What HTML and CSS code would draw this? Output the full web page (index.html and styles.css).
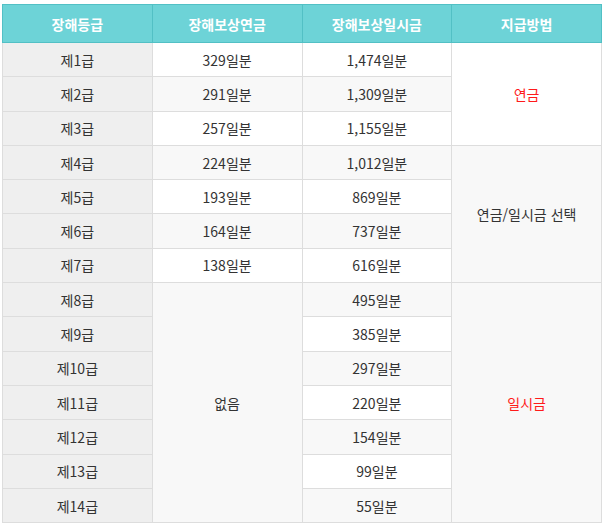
FILE: index.html
```html
<!DOCTYPE html>
<html lang="ko">
<head>
<meta charset="utf-8">
<link rel="stylesheet" href="styles.css">
</head>
<body>
<table class="grade-table">
  <thead>
    <tr><th>장해등급</th><th>장해보상연금</th><th>장해보상일시금</th><th>지급방법</th></tr>
  </thead>
  <tbody>
    <tr><td class="grade">제1급</td><td>329일분</td><td>1,474일분</td><td class="method red" rowspan="3">연금</td></tr>
    <tr><td class="grade">제2급</td><td>291일분</td><td>1,309일분</td></tr>
    <tr><td class="grade">제3급</td><td>257일분</td><td>1,155일분</td></tr>
    <tr><td class="grade">제4급</td><td>224일분</td><td>1,012일분</td><td class="method" rowspan="4">연금/일시금 선택</td></tr>
    <tr><td class="grade">제5급</td><td>193일분</td><td>869일분</td></tr>
    <tr><td class="grade">제6급</td><td>164일분</td><td>737일분</td></tr>
    <tr><td class="grade">제7급</td><td>138일분</td><td>616일분</td></tr>
    <tr><td class="grade">제8급</td><td class="none" rowspan="7">없음</td><td>495일분</td><td class="method red" rowspan="7">일시금</td></tr>
    <tr><td class="grade">제9급</td><td>385일분</td></tr>
    <tr><td class="grade">제10급</td><td>297일분</td></tr>
    <tr><td class="grade">제11급</td><td>220일분</td></tr>
    <tr><td class="grade">제12급</td><td>154일분</td></tr>
    <tr><td class="grade">제13급</td><td>99일분</td></tr>
    <tr><td class="grade">제14급</td><td>55일분</td></tr>
  </tbody>
</table>
</body>
</html>
```
FILE: styles.css
```css
html, body {
  margin: 0;
  padding: 0;
  background: #ffffff;
}
body {
  padding: 4px 0 0 2px;
  font-family: "Noto Sans CJK KR", "Noto Sans", sans-serif;
  font-size: 14px;
  color: #333333;
}
.grade-table {
  width: 600px;
  border-collapse: collapse;
  table-layout: fixed;
}
.grade-table th {
  background: #6dd3d7;
  color: #ffffff;
  font-weight: bold;
  border: 1px solid #52c0c5;
  height: 37px;
  padding: 0;
  line-height: 20px;
  text-align: center;
  vertical-align: middle;
}
.grade-table td {
  border: 1px solid #dddddd;
  height: 33.3px;
  padding: 0;
  line-height: 20px;
  text-align: center;
  vertical-align: middle;
  background: #ffffff;
}
.grade-table tbody tr:nth-child(even) td {
  background: #f8f8f8;
}
.grade-table td.grade,
.grade-table tbody tr:nth-child(even) td.grade {
  background: #efefef;
}
.grade-table td.red {
  color: #ff1a1a;
}
```
